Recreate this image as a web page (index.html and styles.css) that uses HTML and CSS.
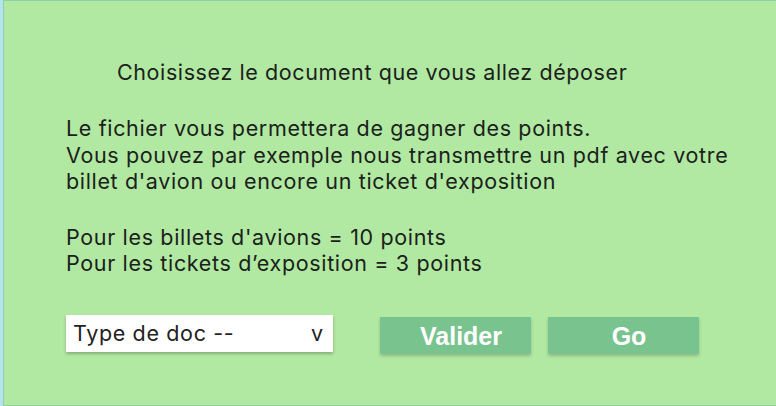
FILE: index.html
```html
<!DOCTYPE html>
<html lang="fr">
<head>
<meta charset="utf-8">
<link rel="stylesheet" href="styles.css">
</head>
<body>
<main class="panel">
  <h1 class="title">Choisissez le document que vous allez déposer</h1>
  <p class="text">Le fichier vous permettera de gagner des points.<br>Vous pouvez par exemple nous transmettre un pdf avec votre<br>billet d'avion ou encore un ticket d'exposition</p>
  <p class="text points">Pour les billets d'avions = 10 points<br>Pour les tickets d’exposition = 3 points</p>
  <div class="controls">
    <div class="select"><span>Type de doc --</span><span class="arrow">v</span></div>
    <div class="buttons">
      <button class="btn">Valider</button>
      <button class="btn">Go</button>
    </div>
  </div>
</main>
</body>
</html>
```
FILE: styles.css
```css
html, body {
  margin: 0;
  padding: 0;
  height: 406px;
  overflow: hidden;
}
body {
  background: #b4e2ee;
  font-family: Inter, "Noto Sans", sans-serif;
  color: #1b211b;
}
.panel {
  box-sizing: border-box;
  margin-left: 3px;
  height: 406px;
  background: #b1e9a2;
  border-top: 1px solid #8fd0a4;
  border-left: 1px solid #8fd0a4;
  border-bottom: 1px solid #8fcf9a;
  padding: 58px 0 0 62px;
  display: flex;
  flex-direction: column;
}
.title {
  margin: 0 0 0 51px;
  font-size: 21.5px;
  font-weight: 400;
  line-height: 26px;
  letter-spacing: 0.6px;
}
.text {
  margin: 30px 0 0 0;
  font-size: 21.5px;
  line-height: 26.5px;
  letter-spacing: 0.65px;
}
.points {
  margin-top: 29px;
}
.controls {
  margin-top: 38px;
  display: flex;
  align-items: flex-start;
}
.select {
  box-sizing: border-box;
  width: 267px;
  height: 37px;
  background: #fff;
  display: flex;
  align-items: center;
  justify-content: space-between;
  padding: 0 10px 0 7px;
  font-size: 21.5px;
  letter-spacing: 0.65px;
  color: #222;
  box-shadow: 0 2px 3px rgba(0,0,0,0.25);
}
.arrow {
  letter-spacing: 0;
}
.buttons {
  display: flex;
  gap: 17px;
  margin-left: 47px;
  margin-top: 2px;
}
.btn {
  width: 151px;
  height: 37px;
  border: none;
  background: #79c38f;
  color: #fff;
  font-family: "Liberation Sans", Arial, sans-serif;
  font-weight: 700;
  font-size: 25px;
  padding: 2px 0 0 11px;
  box-shadow: 0 2px 3px rgba(0,0,0,0.2);
}
```
